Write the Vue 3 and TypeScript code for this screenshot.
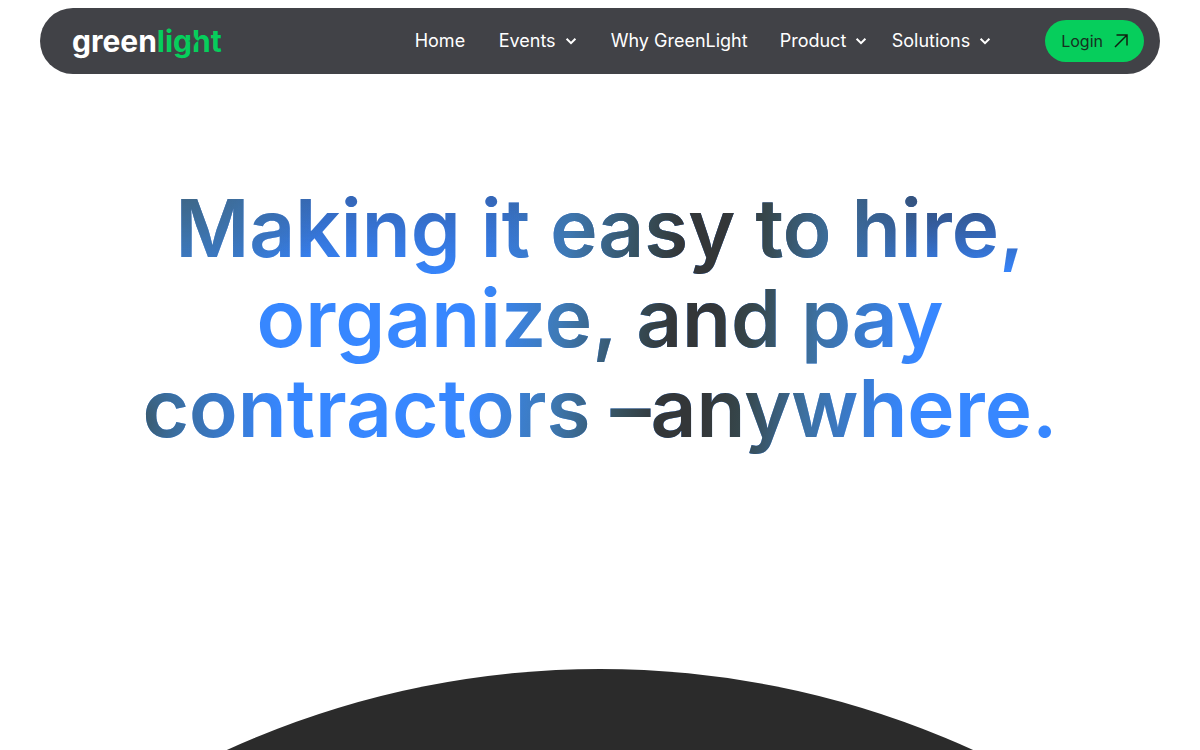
<script setup lang="ts">
interface NavItem {
  label: string
  menu: boolean
}

const items: NavItem[] = [
  { label: 'Home', menu: false },
  { label: 'Events', menu: true },
  { label: 'Why GreenLight', menu: false },
  { label: 'Product', menu: true },
  { label: 'Solutions', menu: true },
]
</script>

<template>
  <div class="page">
    <header class="bar">
      <a class="logo" href="#" aria-label="greenlight">
        <span>green</span><span class="logo-accent">light</span>
        <svg class="spark" viewBox="0 0 12 12" aria-hidden="true">
          <path d="M6 0C6.4 3.8 8.2 5.6 12 6C8.2 6.4 6.4 8.2 6 12C5.6 8.2 3.8 6.4 0 6C3.8 5.6 5.6 3.8 6 0Z" />
        </svg>
      </a>

      <nav class="nav" aria-label="Main">
        <template v-for="item in items" :key="item.label">
          <button v-if="item.menu" type="button" class="link" aria-haspopup="true">
            {{ item.label }}
            <svg class="chevron" viewBox="0 0 12 12" aria-hidden="true">
              <path d="M1.6 3.8L6 8.2L10.4 3.8" />
            </svg>
          </button>
          <a v-else class="link" href="#">{{ item.label }}</a>
        </template>
      </nav>

      <a class="login" href="#">
        Login
        <svg class="arrow" viewBox="0 0 14 14" aria-hidden="true">
          <path d="M1 13L13 1M2.5 1H13V11.5" />
        </svg>
      </a>
    </header>

    <main class="main">
      <h1 class="title">
        Making it easy to hire,<br />organize, and pay<br />contractors –anywhere.
      </h1>
      <div class="horizon">
        <div class="disc"></div>
      </div>
    </main>
  </div>
</template>

<style>
body {
  margin: 0;
  background: #fff;
}
</style>

<style scoped>
.page {
  display: flex;
  flex-direction: column;
  box-sizing: border-box;
  min-height: 100vh;
  padding-top: 8px;
  font-family: Inter, "Liberation Sans", sans-serif;
}

.bar {
  display: flex;
  align-items: center;
  box-sizing: border-box;
  height: 66px;
  margin: 0 40px;
  padding: 0 16px 0 32px;
  border-radius: 33px;
  background: #414247;
}

.logo {
  position: relative;
  display: flex;
  margin-right: auto;
  color: #fff;
  font-size: 30px;
  font-weight: 700;
  line-height: 40px;
  text-decoration: none;
}

.logo-accent {
  color: #06ce5c;
}

.spark {
  position: absolute;
  top: 14px;
  right: 22px;
  width: 12px;
  height: 12px;
  fill: #414247;
}

.nav {
  display: grid;
  grid-template-columns: 84px 112px 169px 112px auto;
  align-items: center;
  margin-right: 54px;
}

.link {
  display: flex;
  align-items: center;
  gap: 9px;
  padding: 0;
  border: 0;
  background: none;
  color: #fff;
  font: inherit;
  font-size: 18px;
  line-height: 28px;
  text-decoration: none;
  white-space: nowrap;
  cursor: pointer;
}

.chevron {
  width: 12px;
  height: 12px;
  fill: none;
  stroke: #fff;
  stroke-width: 2;
}

.login {
  display: flex;
  align-items: center;
  gap: 11px;
  box-sizing: border-box;
  height: 42px;
  padding: 0 16px;
  border-radius: 21px;
  background: #06ce5c;
  color: #16301f;
  font-size: 16px;
  text-decoration: none;
}

.arrow {
  width: 14px;
  height: 14px;
  fill: none;
  stroke: #10200f;
  stroke-width: 1.5;
}

.main {
  display: flex;
  flex: 1;
  flex-direction: column;
}

.title {
  margin: 109px auto 0;
  padding: 0 40px 10px;
  font-size: 80px;
  font-weight: 600;
  line-height: 90px;
  text-align: center;
  color: transparent;
  background:
    radial-gradient(circle at 3% 85%, #3a5460 0, rgba(60, 104, 135, 0.8) 45px, rgba(60, 130, 200, 0) 150px),
    radial-gradient(circle at 8% -4%, #40637a 0, rgba(64, 115, 155, 0.7) 70px, rgba(60, 130, 200, 0) 150px),
    linear-gradient(97deg, rgba(60, 135, 245, 0) 38%, rgba(64, 120, 170, 0.85) 46%, #36505c 53%, #333638 57%, #333638 61%, #36474c 65%, rgba(62, 110, 150, 0.9) 71%, rgba(60, 135, 235, 0) 81%),
    radial-gradient(ellipse 340px 100px at 74% 0%, rgba(51, 55, 65, 0.7), rgba(51, 60, 80, 0)),
    linear-gradient(180deg, rgba(51, 65, 100, 0.55) 0, rgba(51, 75, 130, 0) 95px),
    #3787ff;
  background-clip: text;
  -webkit-background-clip: text;
}

.horizon {
  position: relative;
  flex: 1;
  min-height: 80px;
  margin-top: 206px;
  overflow: hidden;
}

.disc {
  position: absolute;
  top: 0;
  left: -25%;
  width: 150%;
  aspect-ratio: 1;
  border-radius: 50%;
  background: #2b2b2b;
}
</style>
